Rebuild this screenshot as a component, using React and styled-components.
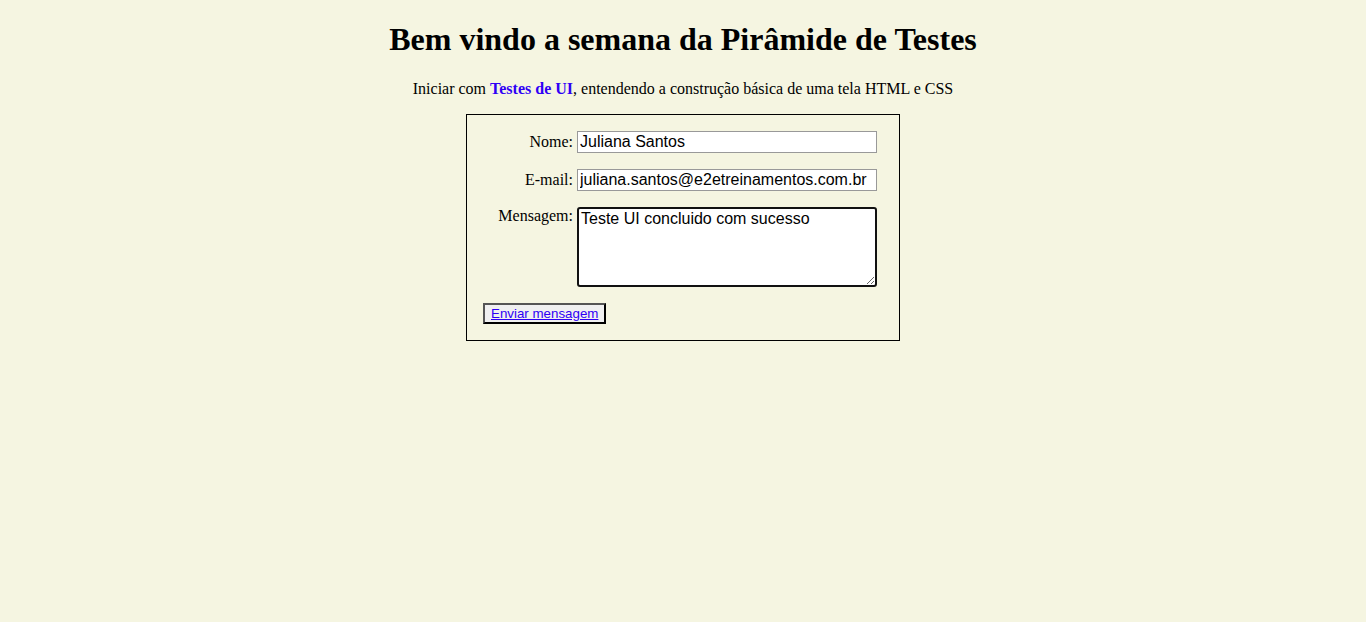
import React from 'react';
import styled, { createGlobalStyle } from 'styled-components';

const GlobalStyle = createGlobalStyle`
  html, body {
    background-color: #f5f5e1;
  }
  body {
    margin: 0 8px 8px;
    font-family: "Liberation Serif", "Times New Roman", serif;
    font-size: 16px;
    color: #000;
  }
`;

const Title = styled.h1`
  font-size: 32px;
  font-weight: bold;
  text-align: center;
  margin: 21.44px 0;
`;

const Intro = styled.p`
  text-align: center;
  margin: 16px 0;
`;

const Highlight = styled.strong`
  color: #2f00f5;
`;

const Form = styled.form`
  width: 400px;
  margin: 0 auto;
  padding: 16px;
  border: 1px solid #000;
`;

const FieldList = styled.ul`
  list-style: none;
  margin: 0;
  padding: 0;
`;

const Field = styled.li`
  display: flex;
  align-items: ${props => (props.top ? 'flex-start' : 'baseline')};
  gap: 4px;
  & + & {
    margin-top: 16px;
  }
`;

const Label = styled.label`
  width: 90px;
  text-align: right;
  line-height: 18px;
  flex-shrink: 0;
`;

const TextInput = styled.input`
  width: 300px;
  box-sizing: border-box;
  font: 16px "Liberation Sans", Arial, sans-serif;
  padding: 1px 2px;
  border: 1px solid #999;
  background: #fff;
  color: #000;
  outline: none;
`;

const MessageBox = styled.textarea`
  width: 300px;
  height: 80px;
  box-sizing: border-box;
  font: 16px "Liberation Sans", Arial, sans-serif;
  padding: 1px 2px;
  border: 2px solid #111;
  border-radius: 3px;
  background: #fff;
  color: #000;
  outline: none;
  resize: both;
  margin: 0;
`;

const Actions = styled.li`
  margin-top: 16px;
  display: flex;
`;

const SubmitButton = styled.button`
  font: 13.333px "Liberation Sans", Arial, sans-serif;
  line-height: 15px;
  padding: 1px 6px;
  background: #f0f0f0;
  border-style: solid;
  border-width: 2px;
  border-color: #555 #000 #000 #555;
  cursor: pointer;
`;

const SubmitLink = styled.a`
  color: #2f00f5;
  text-decoration: underline;
`;

export default function App() {
  return (
    <>
      <GlobalStyle />
      <Title>Bem vindo a semana da Pirâmide de Testes</Title>
      <Intro>
        Iniciar com <Highlight>Testes de UI</Highlight>, entendendo a construção básica de uma tela HTML e CSS
      </Intro>
      <Form onSubmit={e => e.preventDefault()}>
        <FieldList>
          <Field>
            <Label htmlFor="nome">Nome:</Label>
            <TextInput id="nome" type="text" defaultValue="Juliana Santos" />
          </Field>
          <Field>
            <Label htmlFor="email">E-mail:</Label>
            <TextInput id="email" type="email" defaultValue="juliana.santos@e2etreinamentos.com.br" />
          </Field>
          <Field top>
            <Label htmlFor="msg">Mensagem:</Label>
            <MessageBox id="msg" defaultValue="Teste UI concluido com sucesso" />
          </Field>
          <Actions>
            <SubmitButton type="submit">
              <SubmitLink href="#">Enviar mensagem</SubmitLink>
            </SubmitButton>
          </Actions>
        </FieldList>
      </Form>
    </>
  );
}
